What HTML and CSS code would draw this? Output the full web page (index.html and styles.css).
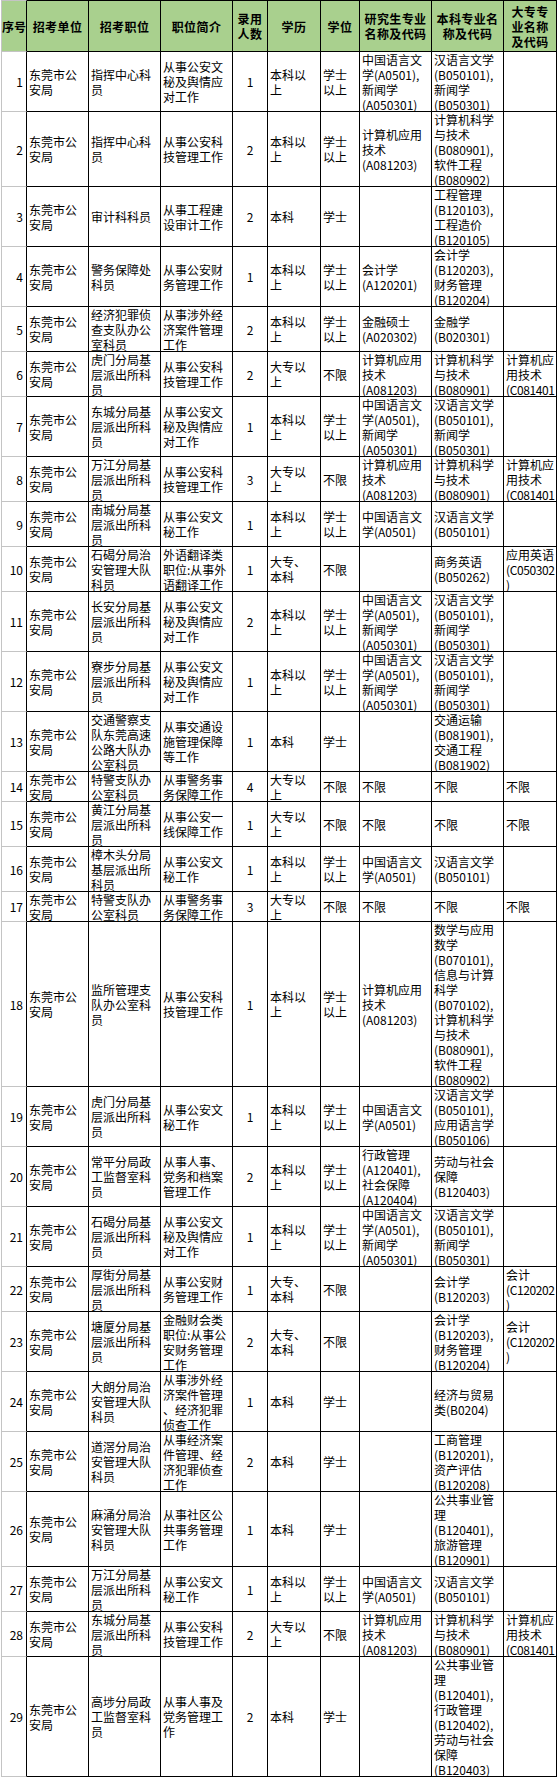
FILE: index.html
```html
<!DOCTYPE html>
<html lang="zh-CN">
<head>
<meta charset="utf-8">
<title>东莞市公安局招考职位表</title>
<link rel="stylesheet" href="styles.css">
</head>
<body>
<div class="sheet">
  <div class="row head">
    <div class="c num"><div>序号</div></div>
    <div class="c"><div>招考单位</div></div>
    <div class="c"><div>招考职位</div></div>
    <div class="c"><div>职位简介</div></div>
    <div class="c"><div>录用<br>人数</div></div>
    <div class="c"><div>学历</div></div>
    <div class="c"><div>学位</div></div>
    <div class="c"><div>研究生专业<br>名称及代码</div></div>
    <div class="c"><div>本科专业名<br>称及代码</div></div>
    <div class="c"><div>大专专<br>业名称<br>及代码</div></div>
  </div>

  <div class="row h60">
    <div class="c num"><div>1</div></div>
    <div class="c"><div>东莞市公<br>安局</div></div>
    <div class="c"><div>指挥中心科<br>员</div></div>
    <div class="c"><div>从事公安文<br>秘及舆情应<br>对工作</div></div>
    <div class="c cnt"><div>1</div></div>
    <div class="c"><div>本科以<br>上</div></div>
    <div class="c"><div>学士<br>以上</div></div>
    <div class="c"><div>中国语言文<br>学(A0501),<br>新闻学<br>(A050301)</div></div>
    <div class="c"><div>汉语言文学<br>(B050101),<br>新闻学<br>(B050301)</div></div>
    <div class="c"><div></div></div>
  </div>

  <div class="row h75">
    <div class="c num"><div>2</div></div>
    <div class="c"><div>东莞市公<br>安局</div></div>
    <div class="c"><div>指挥中心科<br>员</div></div>
    <div class="c"><div>从事公安科<br>技管理工作</div></div>
    <div class="c cnt"><div>2</div></div>
    <div class="c"><div>本科以<br>上</div></div>
    <div class="c"><div>学士<br>以上</div></div>
    <div class="c"><div>计算机应用<br>技术<br>(A081203)</div></div>
    <div class="c"><div>计算机科学<br>与技术<br>(B080901),<br>软件工程<br>(B080902)</div></div>
    <div class="c"><div></div></div>
  </div>

  <div class="row h60">
    <div class="c num"><div>3</div></div>
    <div class="c"><div>东莞市公<br>安局</div></div>
    <div class="c"><div>审计科科员</div></div>
    <div class="c"><div>从事工程建<br>设审计工作</div></div>
    <div class="c cnt"><div>2</div></div>
    <div class="c"><div>本科</div></div>
    <div class="c"><div>学士</div></div>
    <div class="c"><div></div></div>
    <div class="c"><div>工程管理<br>(B120103),<br>工程造价<br>(B120105)</div></div>
    <div class="c"><div></div></div>
  </div>

  <div class="row h60">
    <div class="c num"><div>4</div></div>
    <div class="c"><div>东莞市公<br>安局</div></div>
    <div class="c"><div>警务保障处<br>科员</div></div>
    <div class="c"><div>从事公安财<br>务管理工作</div></div>
    <div class="c cnt"><div>1</div></div>
    <div class="c"><div>本科以<br>上</div></div>
    <div class="c"><div>学士<br>以上</div></div>
    <div class="c"><div>会计学<br>(A120201)</div></div>
    <div class="c"><div>会计学<br>(B120203),<br>财务管理<br>(B120204)</div></div>
    <div class="c"><div></div></div>
  </div>

  <div class="row h45">
    <div class="c num"><div>5</div></div>
    <div class="c"><div>东莞市公<br>安局</div></div>
    <div class="c"><div>经济犯罪侦<br>查支队办公<br>室科员</div></div>
    <div class="c"><div>从事涉外经<br>济案件管理<br>工作</div></div>
    <div class="c cnt"><div>2</div></div>
    <div class="c"><div>本科以<br>上</div></div>
    <div class="c"><div>学士<br>以上</div></div>
    <div class="c"><div>金融硕士<br>(A020302)</div></div>
    <div class="c"><div>金融学<br>(B020301)</div></div>
    <div class="c"><div></div></div>
  </div>

  <div class="row h45">
    <div class="c num"><div>6</div></div>
    <div class="c"><div>东莞市公<br>安局</div></div>
    <div class="c"><div>虎门分局基<br>层派出所科<br>员</div></div>
    <div class="c"><div>从事公安科<br>技管理工作</div></div>
    <div class="c cnt"><div>2</div></div>
    <div class="c"><div>大专以<br>上</div></div>
    <div class="c"><div>不限</div></div>
    <div class="c"><div>计算机应用<br>技术<br>(A081203)</div></div>
    <div class="c"><div>计算机科学<br>与技术<br>(B080901)</div></div>
    <div class="c"><div>计算机应<br>用技术<br><span class="sq">(C081401</span></div></div>
  </div>

  <div class="row h60">
    <div class="c num"><div>7</div></div>
    <div class="c"><div>东莞市公<br>安局</div></div>
    <div class="c"><div>东城分局基<br>层派出所科<br>员</div></div>
    <div class="c"><div>从事公安文<br>秘及舆情应<br>对工作</div></div>
    <div class="c cnt"><div>1</div></div>
    <div class="c"><div>本科以<br>上</div></div>
    <div class="c"><div>学士<br>以上</div></div>
    <div class="c"><div>中国语言文<br>学(A0501),<br>新闻学<br>(A050301)</div></div>
    <div class="c"><div>汉语言文学<br>(B050101),<br>新闻学<br>(B050301)</div></div>
    <div class="c"><div></div></div>
  </div>

  <div class="row h45">
    <div class="c num"><div>8</div></div>
    <div class="c"><div>东莞市公<br>安局</div></div>
    <div class="c"><div>万江分局基<br>层派出所科<br>员</div></div>
    <div class="c"><div>从事公安科<br>技管理工作</div></div>
    <div class="c cnt"><div>3</div></div>
    <div class="c"><div>大专以<br>上</div></div>
    <div class="c"><div>不限</div></div>
    <div class="c"><div>计算机应用<br>技术<br>(A081203)</div></div>
    <div class="c"><div>计算机科学<br>与技术<br>(B080901)</div></div>
    <div class="c"><div>计算机应<br>用技术<br><span class="sq">(C081401</span></div></div>
  </div>

  <div class="row h45">
    <div class="c num"><div>9</div></div>
    <div class="c"><div>东莞市公<br>安局</div></div>
    <div class="c"><div>南城分局基<br>层派出所科<br>员</div></div>
    <div class="c"><div>从事公安文<br>秘工作</div></div>
    <div class="c cnt"><div>1</div></div>
    <div class="c"><div>本科以<br>上</div></div>
    <div class="c"><div>学士<br>以上</div></div>
    <div class="c"><div>中国语言文<br>学(A0501)</div></div>
    <div class="c"><div>汉语言文学<br>(B050101)</div></div>
    <div class="c"><div></div></div>
  </div>

  <div class="row h45">
    <div class="c num"><div>10</div></div>
    <div class="c"><div>东莞市公<br>安局</div></div>
    <div class="c"><div>石碣分局治<br>安管理大队<br>科员</div></div>
    <div class="c"><div>外语翻译类<br>职位:从事外<br>语翻译工作</div></div>
    <div class="c cnt"><div>1</div></div>
    <div class="c"><div>大专、<br>本科</div></div>
    <div class="c"><div>不限</div></div>
    <div class="c"><div></div></div>
    <div class="c"><div>商务英语<br>(B050262)</div></div>
    <div class="c"><div>应用英语<br><span class="sq">(C050302</span><br>)</div></div>
  </div>

  <div class="row h60">
    <div class="c num"><div>11</div></div>
    <div class="c"><div>东莞市公<br>安局</div></div>
    <div class="c"><div>长安分局基<br>层派出所科<br>员</div></div>
    <div class="c"><div>从事公安文<br>秘及舆情应<br>对工作</div></div>
    <div class="c cnt"><div>2</div></div>
    <div class="c"><div>本科以<br>上</div></div>
    <div class="c"><div>学士<br>以上</div></div>
    <div class="c"><div>中国语言文<br>学(A0501),<br>新闻学<br>(A050301)</div></div>
    <div class="c"><div>汉语言文学<br>(B050101),<br>新闻学<br>(B050301)</div></div>
    <div class="c"><div></div></div>
  </div>

  <div class="row h60">
    <div class="c num"><div>12</div></div>
    <div class="c"><div>东莞市公<br>安局</div></div>
    <div class="c"><div>寮步分局基<br>层派出所科<br>员</div></div>
    <div class="c"><div>从事公安文<br>秘及舆情应<br>对工作</div></div>
    <div class="c cnt"><div>1</div></div>
    <div class="c"><div>本科以<br>上</div></div>
    <div class="c"><div>学士<br>以上</div></div>
    <div class="c"><div>中国语言文<br>学(A0501),<br>新闻学<br>(A050301)</div></div>
    <div class="c"><div>汉语言文学<br>(B050101),<br>新闻学<br>(B050301)</div></div>
    <div class="c"><div></div></div>
  </div>

  <div class="row h60">
    <div class="c num"><div>13</div></div>
    <div class="c"><div>东莞市公<br>安局</div></div>
    <div class="c"><div>交通警察支<br>队东莞高速<br>公路大队办<br>公室科员</div></div>
    <div class="c"><div>从事交通设<br>施管理保障<br>等工作</div></div>
    <div class="c cnt"><div>1</div></div>
    <div class="c"><div>本科</div></div>
    <div class="c"><div>学士</div></div>
    <div class="c"><div></div></div>
    <div class="c"><div>交通运输<br>(B081901),<br>交通工程<br>(B081902)</div></div>
    <div class="c"><div></div></div>
  </div>

  <div class="row h30">
    <div class="c num"><div>14</div></div>
    <div class="c"><div>东莞市公<br>安局</div></div>
    <div class="c"><div>特警支队办<br>公室科员</div></div>
    <div class="c"><div>从事警务事<br>务保障工作</div></div>
    <div class="c cnt"><div>4</div></div>
    <div class="c"><div>大专以<br>上</div></div>
    <div class="c"><div>不限</div></div>
    <div class="c"><div>不限</div></div>
    <div class="c"><div>不限</div></div>
    <div class="c"><div>不限</div></div>
  </div>

  <div class="row h45">
    <div class="c num"><div>15</div></div>
    <div class="c"><div>东莞市公<br>安局</div></div>
    <div class="c"><div>黄江分局基<br>层派出所科<br>员</div></div>
    <div class="c"><div>从事公安一<br>线保障工作</div></div>
    <div class="c cnt"><div>1</div></div>
    <div class="c"><div>大专以<br>上</div></div>
    <div class="c"><div>不限</div></div>
    <div class="c"><div>不限</div></div>
    <div class="c"><div>不限</div></div>
    <div class="c"><div>不限</div></div>
  </div>

  <div class="row h45">
    <div class="c num"><div>16</div></div>
    <div class="c"><div>东莞市公<br>安局</div></div>
    <div class="c"><div>樟木头分局<br>基层派出所<br>科员</div></div>
    <div class="c"><div>从事公安文<br>秘工作</div></div>
    <div class="c cnt"><div>1</div></div>
    <div class="c"><div>本科以<br>上</div></div>
    <div class="c"><div>学士<br>以上</div></div>
    <div class="c"><div>中国语言文<br>学(A0501)</div></div>
    <div class="c"><div>汉语言文学<br>(B050101)</div></div>
    <div class="c"><div></div></div>
  </div>

  <div class="row h30">
    <div class="c num"><div>17</div></div>
    <div class="c"><div>东莞市公<br>安局</div></div>
    <div class="c"><div>特警支队办<br>公室科员</div></div>
    <div class="c"><div>从事警务事<br>务保障工作</div></div>
    <div class="c cnt"><div>3</div></div>
    <div class="c"><div>大专以<br>上</div></div>
    <div class="c"><div>不限</div></div>
    <div class="c"><div>不限</div></div>
    <div class="c"><div>不限</div></div>
    <div class="c"><div>不限</div></div>
  </div>

  <div class="row h165">
    <div class="c num"><div>18</div></div>
    <div class="c"><div>东莞市公<br>安局</div></div>
    <div class="c"><div>监所管理支<br>队办公室科<br>员</div></div>
    <div class="c"><div>从事公安科<br>技管理工作</div></div>
    <div class="c cnt"><div>1</div></div>
    <div class="c"><div>本科以<br>上</div></div>
    <div class="c"><div>学士<br>以上</div></div>
    <div class="c"><div>计算机应用<br>技术<br>(A081203)</div></div>
    <div class="c"><div>数学与应用<br>数学<br>(B070101),<br>信息与计算<br>科学<br>(B070102),<br>计算机科学<br>与技术<br>(B080901),<br>软件工程<br>(B080902)</div></div>
    <div class="c"><div></div></div>
  </div>

  <div class="row h60">
    <div class="c num"><div>19</div></div>
    <div class="c"><div>东莞市公<br>安局</div></div>
    <div class="c"><div>虎门分局基<br>层派出所科<br>员</div></div>
    <div class="c"><div>从事公安文<br>秘工作</div></div>
    <div class="c cnt"><div>1</div></div>
    <div class="c"><div>本科以<br>上</div></div>
    <div class="c"><div>学士<br>以上</div></div>
    <div class="c"><div>中国语言文<br>学(A0501)</div></div>
    <div class="c"><div>汉语言文学<br>(B050101),<br>应用语言学<br>(B050106)</div></div>
    <div class="c"><div></div></div>
  </div>

  <div class="row h60">
    <div class="c num"><div>20</div></div>
    <div class="c"><div>东莞市公<br>安局</div></div>
    <div class="c"><div>常平分局政<br>工监督室科<br>员</div></div>
    <div class="c"><div>从事人事、<br>党务和档案<br>管理工作</div></div>
    <div class="c cnt"><div>2</div></div>
    <div class="c"><div>本科以<br>上</div></div>
    <div class="c"><div>学士<br>以上</div></div>
    <div class="c"><div>行政管理<br>(A120401),<br>社会保障<br>(A120404)</div></div>
    <div class="c"><div>劳动与社会<br>保障<br>(B120403)</div></div>
    <div class="c"><div></div></div>
  </div>

  <div class="row h60">
    <div class="c num"><div>21</div></div>
    <div class="c"><div>东莞市公<br>安局</div></div>
    <div class="c"><div>石碣分局基<br>层派出所科<br>员</div></div>
    <div class="c"><div>从事公安文<br>秘及舆情应<br>对工作</div></div>
    <div class="c cnt"><div>1</div></div>
    <div class="c"><div>本科以<br>上</div></div>
    <div class="c"><div>学士<br>以上</div></div>
    <div class="c"><div>中国语言文<br>学(A0501),<br>新闻学<br>(A050301)</div></div>
    <div class="c"><div>汉语言文学<br>(B050101),<br>新闻学<br>(B050301)</div></div>
    <div class="c"><div></div></div>
  </div>

  <div class="row h45">
    <div class="c num"><div>22</div></div>
    <div class="c"><div>东莞市公<br>安局</div></div>
    <div class="c"><div>厚街分局基<br>层派出所科<br>员</div></div>
    <div class="c"><div>从事公安财<br>务管理工作</div></div>
    <div class="c cnt"><div>1</div></div>
    <div class="c"><div>大专、<br>本科</div></div>
    <div class="c"><div>不限</div></div>
    <div class="c"><div></div></div>
    <div class="c"><div>会计学<br>(B120203)</div></div>
    <div class="c"><div>会计<br><span class="sq">(C120202</span><br>)</div></div>
  </div>

  <div class="row h60">
    <div class="c num"><div>23</div></div>
    <div class="c"><div>东莞市公<br>安局</div></div>
    <div class="c"><div>塘厦分局基<br>层派出所科<br>员</div></div>
    <div class="c"><div>金融财会类<br>职位:从事公<br>安财务管理<br>工作</div></div>
    <div class="c cnt"><div>2</div></div>
    <div class="c"><div>大专、<br>本科</div></div>
    <div class="c"><div>不限</div></div>
    <div class="c"><div></div></div>
    <div class="c"><div>会计学<br>(B120203),<br>财务管理<br>(B120204)</div></div>
    <div class="c"><div>会计<br><span class="sq">(C120202</span><br>)</div></div>
  </div>

  <div class="row h60">
    <div class="c num"><div>24</div></div>
    <div class="c"><div>东莞市公<br>安局</div></div>
    <div class="c"><div>大朗分局治<br>安管理大队<br>科员</div></div>
    <div class="c"><div>从事涉外经<br>济案件管理<br>、经济犯罪<br>侦查工作</div></div>
    <div class="c cnt"><div>1</div></div>
    <div class="c"><div>本科</div></div>
    <div class="c"><div>学士</div></div>
    <div class="c"><div></div></div>
    <div class="c"><div>经济与贸易<br>类(B0204)</div></div>
    <div class="c"><div></div></div>
  </div>

  <div class="row h60">
    <div class="c num"><div>25</div></div>
    <div class="c"><div>东莞市公<br>安局</div></div>
    <div class="c"><div>道滘分局治<br>安管理大队<br>科员</div></div>
    <div class="c"><div>从事经济案<br>件管理、经<br>济犯罪侦查<br>工作</div></div>
    <div class="c cnt"><div>2</div></div>
    <div class="c"><div>本科</div></div>
    <div class="c"><div>学士</div></div>
    <div class="c"><div></div></div>
    <div class="c"><div>工商管理<br>(B120201),<br>资产评估<br>(B120208)</div></div>
    <div class="c"><div></div></div>
  </div>

  <div class="row h75">
    <div class="c num"><div>26</div></div>
    <div class="c"><div>东莞市公<br>安局</div></div>
    <div class="c"><div>麻涌分局治<br>安管理大队<br>科员</div></div>
    <div class="c"><div>从事社区公<br>共事务管理<br>工作</div></div>
    <div class="c cnt"><div>1</div></div>
    <div class="c"><div>本科</div></div>
    <div class="c"><div>学士</div></div>
    <div class="c"><div></div></div>
    <div class="c"><div>公共事业管<br>理<br>(B120401),<br>旅游管理<br>(B120901)</div></div>
    <div class="c"><div></div></div>
  </div>

  <div class="row h45">
    <div class="c num"><div>27</div></div>
    <div class="c"><div>东莞市公<br>安局</div></div>
    <div class="c"><div>万江分局基<br>层派出所科<br>员</div></div>
    <div class="c"><div>从事公安文<br>秘工作</div></div>
    <div class="c cnt"><div>1</div></div>
    <div class="c"><div>本科以<br>上</div></div>
    <div class="c"><div>学士<br>以上</div></div>
    <div class="c"><div>中国语言文<br>学(A0501)</div></div>
    <div class="c"><div>汉语言文学<br>(B050101)</div></div>
    <div class="c"><div></div></div>
  </div>

  <div class="row h45">
    <div class="c num"><div>28</div></div>
    <div class="c"><div>东莞市公<br>安局</div></div>
    <div class="c"><div>东城分局基<br>层派出所科<br>员</div></div>
    <div class="c"><div>从事公安科<br>技管理工作</div></div>
    <div class="c cnt"><div>2</div></div>
    <div class="c"><div>大专以<br>上</div></div>
    <div class="c"><div>不限</div></div>
    <div class="c"><div>计算机应用<br>技术<br>(A081203)</div></div>
    <div class="c"><div>计算机科学<br>与技术<br>(B080901)</div></div>
    <div class="c"><div>计算机应<br>用技术<br><span class="sq">(C081401</span></div></div>
  </div>

  <div class="row h120">
    <div class="c num"><div>29</div></div>
    <div class="c"><div>东莞市公<br>安局</div></div>
    <div class="c"><div>高埗分局政<br>工监督室科<br>员</div></div>
    <div class="c"><div>从事人事及<br>党务管理工<br>作</div></div>
    <div class="c cnt"><div>2</div></div>
    <div class="c"><div>本科</div></div>
    <div class="c"><div>学士</div></div>
    <div class="c"><div></div></div>
    <div class="c"><div>公共事业管<br>理<br>(B120401),<br>行政管理<br>(B120402),<br>劳动与社会<br>保障<br>(B120403)</div></div>
    <div class="c"><div></div></div>
  </div>
</div>
</body>
</html>
```

FILE: styles.css
```css
html, body {
  margin: 0;
  padding: 0;
  background: #ffffff;
}

body {
  font-family: "Noto Sans CJK SC", "Noto Sans", sans-serif;
  font-size: 12px;
  color: #000000;
}

.sheet {
  margin-left: 1px;
  width: 556px;
}

.row {
  display: grid;
  grid-template-columns: 26px 62px 72px 72px 35px 53px 39px 72px 72px 53px;
  grid-template-rows: minmax(0, 1fr);
}

.c {
  box-sizing: border-box;
  display: flex;
  flex-direction: column;
  justify-content: safe center;
  overflow: hidden;
  border-right: 1px solid #000000;
  border-bottom: 1px solid #000000;
  padding: 0 1px 0 2px;
  line-height: 15px;
  white-space: nowrap;
  text-align: left;
}

.c.num {
  border-left: 1px solid #c4c4c4;
  border-bottom-color: #c4c4c4;
  text-align: right;
  padding: 0 3px 0 0;
}

.c.cnt {
  text-align: center;
  padding: 0;
}

.sq {
  letter-spacing: -0.4px;
}

.head {
  height: 52px;
}

.head .c {
  background: #a9d08e;
  border-top: 1px solid #000000;
  font-weight: bold;
  font-size: 12px;
  letter-spacing: 0.4px;
  line-height: 15px;
  text-align: center;
  padding: 0;
}

.head .c.num {
  border-top-color: #c4c4c4;
  letter-spacing: 0;
}

.h30 { height: 30px; }
.h45 { height: 45px; }
.h60 { height: 60px; }
.h75 { height: 75px; }
.h120 { height: 120px; }
.h165 { height: 165px; }
```
